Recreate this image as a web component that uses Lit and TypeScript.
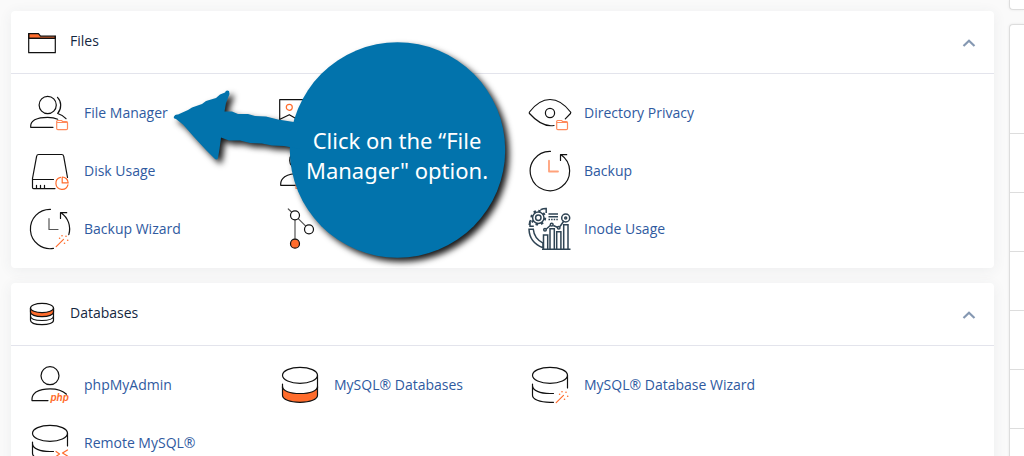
import { LitElement, html, svg, css, nothing } from "lit";
import { customElement, property, state } from "lit/decorators.js";

const folderBadge = svg`<g class="accent"><path class="faint" d="M28.7 30v7.5q0 1.2 1.2 1.2h8.4q1.2 0 1.2-1.2V31.700q0-1-1-1H34.500l-.7-1.200h-4.200q-.9 0-.9.9M29 31.500h9.800"/></g>`;
const wandBadge = svg`<g class="accent"><path d="M28.200 39.600l7.300-7.300"/></g>
  <g class="accent-fill"><circle cx="34" cy="28.700" r=".8"/><circle cx="38" cy="29.200" r=".8"/><circle cx="31.600" cy="31.300" r=".8"/><circle cx="39.700" cy="33.300" r=".8"/><circle cx="36.500" cy="36.300" r=".8"/></g>`;
const drumTop = svg`<ellipse cx="22" cy="12.300" rx="17.500" ry="8"/>`;
const openDrum = svg`${drumTop}<path d="M4.500 21v11.300c0 4 7 7 17.500 7h3.500M4.500 22.500c0 5 7.500 8 17.500 8h3.500M39.500 12.300V25"/>`;
const person = svg`<circle cx="22" cy="12.700" r="9"/><path d="M20 37.600H4V36q0-4 4-7 5.500-3.200 14-3.200 11 0 16.500 5.400"/>`;

const art: Record<string, unknown> = {
  people: svg`<circle cx="19.700" cy="14" r="8.600"/>
    <path d="M29.500 6.300q3.200 3.300 3.200 7.700 0 5-3 8.500 5 1.500 8.300 5.200M25 36.300H2.700V35q0-3.800 4-6.200 5-2.400 13-2.400 6 0 10 1.800"/>${folderBadge}`,
  picture: svg`<path d="M1.700 34V8.700H40V34zM2 28.300l9.300-4.600 7 4 8-6 13.700 8"/><g class="accent"><circle cx="11.300" cy="16.300" r="3"/></g>`,
  eye: svg`<path d="M26 34.500Q14 36.500 1.500 22.500q-.6-.7 0-1.500Q11 8.500 22 8.500T42.500 21q.6.700 0 1.500l-5.200 5.300"/><circle cx="22" cy="22" r="4.600"/>${folderBadge}`,
  disk: svg`<path d="M39.500 28.500L35.700 7.300q-.4-1.800-2-1.800H10.600q-1.600 0-2 1.800L4.500 29.500v9q0 1.100 1.100 1.100H27M4.500 30.500h21M8.500 36.300v3.300M12.500 36.300v3.300M16.500 36.300v3.300"/>
    <g class="accent"><path d="M32.500 28.300a6.100 6.100 0 1 0 7.400 7.500M34.200 28v5.900h6a6 6 0 0 0-6-5.900"/></g>`,
  person: svg`<g transform="translate(-1.300 -1.300)">${person}</g><g class="accent"><path class="faint" d="M18 34.500h8v5h-8z"/></g>`,
  clock: svg`<path d="M22.500 2.300A19.700 19.700 0 1 0 33 5.700M32.500 11.500V5.700h6.200"/><g class="accent"><path class="bold" d="M21 11.700v10.800h9"/></g>`,
  clockWand: svg`<path d="M22.500 2.300A19.700 19.700 0 1 0 25.500 41.400M40.800 27.700A19.700 19.700 0 0 0 33 5.700M32.500 11.500V5.700h6.200"/><path class="gray" d="M21 11.700v10.800h9"/>${wandBadge}`,
  branch: svg`<path class="gray" d="M10.300 2l6.700 6.300v28.400M17 8.300l14 14"/><g class="solid"><circle cx="17" cy="8.300" r="4.500"/><circle cx="31" cy="22.300" r="4.500"/><circle class="hot" cx="17" cy="36.700" r="4.500"/></g>`,
  chart: svg`<g class="slate">
    <path d="M14 42.300h28.500M15.500 42V28h4.200v14M22 42V21.700h4.300V42M28.700 42V24.700h4.200V42M35.700 42V17.700h4.300V42M18.300 22l4-3.500M25.300 18.500l4 1.700M32 19.500l4-5.700"/>
    <circle cx="17" cy="22.800" r="1.300"/><circle cx="23.700" cy="17.700" r="1.400"/><circle cx="30.700" cy="20.700" r="1.300"/><circle cx="37.700" cy="11" r="4"/><circle cx="37.700" cy="11" r="1"/>
    <path d="M20.500 7h9.500M20.500 9.700h9.500"/><path stroke-dasharray="1.500 1.100" d="M20.500 12.400h9.500"/>
    <path d="M1 22.300h4.300q.8 9.200 9.700 13.800v4.700Q1.500 35.700 1 22.300zM1.200 18q.2-2.800 1.300-5M12.500 2.700q3-1.300 5.700-1.200v4.600"/>
    <path d="M2 14v5.300h3.800"/>
    <circle cx="10.300" cy="10.700" r="5.700"/><circle cx="10.300" cy="10.700" r="2.700"/>
    <path stroke-width="2.200" stroke-dasharray="2.400 2.940" d="M10.300 3.900a6.800 6.800 0 1 1-.01 0"/></g>`,
  php: svg`${person}<text x="22.500" y="38">php</text>`,
  drum: svg`<path class="hot" d="M4.500 23.500c0 4.500 7.500 7 17.500 7s17.500-2.500 17.500-7v8.800c0 4-7 7-17.500 7s-17.500-3-17.500-7z"/>${drumTop}<path d="M4.500 21v4M39.500 12.300V25"/>`,
  drumWand: svg`${openDrum}${wandBadge}`,
  drumRemote: svg`${openDrum}<g class="accent"><path d="M28 30.500l3.500 2.500-3.500 2.500M39.500 29l-5 3 5 3"/></g>`,
  folder: svg`<path class="hot" d="M.700 10V5.700h9.800l2 2.500h14.800V10.300H.7z"/><path d="M.700 5.700v19h26.600V8.200M.700 10.300h26.600"/>`,
  stack: svg`<path d="M2.500 8v12.300c0 2.700 5 4.400 11.500 4.400s11.500-1.700 11.500-4.400V8M2.500 16c0 2.800 5 4.500 11.500 4.500s11.500-1.700 11.500-4.500"/>
    <path class="hot" d="M2.500 8v4c0 2.800 5 4.600 11.500 4.600s11.500-1.800 11.500-4.600V8z"/><ellipse class="paper" cx="14" cy="8" rx="11.500" ry="4.600"/>`,
};

@customElement("line-icon")
class LineIcon extends LitElement {
  @property() name = "";
  @property({ type: Number }) size = 44;
  static styles = css`
    :host { display: block; flex: none; }
    svg { display: block; fill: none; stroke: #111; stroke-width: 1.2; stroke-linecap: round; stroke-linejoin: round; }
    .accent { stroke: #ff6c2c; }
    .faint { stroke: #ff8a5c; }
    .bold { stroke: #ffa17a; stroke-width: 1.8; }
    .gray { stroke: #555; }
    .accent-fill { fill: #ff6c2c; stroke: none; }
    .solid { fill: #fff; }
    .paper { fill: #fff; }
    .hot { fill: #ff6c2c; }
    .slate { stroke: #2f4454; stroke-width: 1.5; stroke-linecap: butt; stroke-linejoin: miter; }
    text { font: italic 700 10px "Liberation Sans", sans-serif; fill: #ff6c2c; stroke: none; }
  `;
  render() {
    return html`<svg width=${this.size} height=${this.size} viewBox="0 0 ${this.size} ${this.size}" aria-hidden="true">${art[this.name]}</svg>`;
  }
}

type Tool = { icon: string; label: string; iconOnly?: boolean };

@customElement("tool-panel")
class ToolPanel extends LitElement {
  @property() heading = "";
  @property() icon = "";
  @property({ attribute: false }) tools: Tool[] = [];
  @state() open = true;
  static styles = css`
    :host { display: block; background: #fff; border-radius: 4px; box-shadow: 0 2px 14px rgba(50, 70, 80, 0.07); font: 14px/20px "Open Sans", sans-serif; }
    header { display: flex; align-items: center; gap: 14px; height: 62px; padding: 0 16px 0 17px; border-bottom: 1px solid #e3e4ec; }
    h2 { flex: 1; margin: 0; padding-bottom: 2px; font-size: 14px; font-weight: 400; color: #14273f; }
    button { display: flex; border: 0; padding: 3px 2px 1px; background: none; cursor: pointer; }
    .chevron { fill: none; stroke: #8598b2; stroke-width: 2.2; }
    .grid { display: grid; grid-template-columns: repeat(auto-fill, 250px); margin: 0; padding: 10px 17px; list-style: none; }
    a { display: flex; align-items: center; gap: 12px; height: 58px; color: #2f5a9f; text-decoration: none; }
    a:hover { text-decoration: underline; }
  `;
  render() {
    return html`
      <header>
        <line-icon name=${this.icon} size="28"></line-icon>
        <h2>${this.heading}</h2>
        <button aria-label="Toggle ${this.heading}" aria-expanded=${this.open} @click=${() => (this.open = !this.open)}>
          <svg class="chevron" width="14" height="10" viewBox="0 0 14 10"><path d="M1.500 8L7 2.700 12.500 8" /></svg>
        </button>
      </header>
      ${this.open
        ? html`<ul class="grid">
            ${this.tools.map(
              (t) => html`<li><a href="#" aria-label=${t.label}>
                <line-icon name=${t.icon}></line-icon>${t.iconOnly ? nothing : html`<span>${t.label}</span>`}
              </a></li>`
            )}
          </ul>`
        : nothing}
    `;
  }
}

@customElement("app-root")
class AppRoot extends LitElement {
  files: Tool[] = [
    { icon: "people", label: "File Manager" },
    { icon: "picture", label: "Images", iconOnly: true },
    { icon: "eye", label: "Directory Privacy" },
    { icon: "disk", label: "Disk Usage" },
    { icon: "person", label: "FTP Accounts", iconOnly: true },
    { icon: "clock", label: "Backup" },
    { icon: "clockWand", label: "Backup Wizard" },
    { icon: "branch", label: "Version Control", iconOnly: true },
    { icon: "chart", label: "Inode Usage" },
  ];
  databases: Tool[] = [
    { icon: "php", label: "phpMyAdmin" },
    { icon: "drum", label: "MySQL® Databases" },
    { icon: "drumWand", label: "MySQL® Database Wizard" },
    { icon: "drumRemote", label: "Remote MySQL®" },
  ];
  static styles = css`
    :host { display: block; position: relative; height: 100vh; overflow: hidden; background: #fafafa; }
    .page { display: grid; grid-template-columns: minmax(0, 1fr) 15px; gap: 15px; padding-left: 11px; }
    main { display: grid; gap: 15px; align-content: start; padding-top: 11px; }
    aside { display: grid; gap: 14px; align-content: start; }
    .card { background: #fff; border: 1px solid #ddd; border-right: 0; box-shadow: 0 0 3px rgba(0, 0, 0, 0.08); }
    .stub { height: 9px; border-top: 0; border-radius: 0 0 0 4px; }
    .stats { border-radius: 4px 0 0 0; }
    .row { height: 58px; border-bottom: 1px solid #ddd; }
    .row:first-child { height: 108px; }
    .callout { position: absolute; left: 164px; top: 32px; width: 356px; height: 240px; pointer-events: none; }
    .shape { display: block; fill: #0273ac; filter: drop-shadow(4px 4px 3px rgba(0, 0, 0, 0.9)); }
    .message { position: absolute; left: 133px; top: 93px; width: 200px; margin: 0; color: #fff; font: 22px/30px "Noto Sans", sans-serif; text-align: center; white-space: nowrap; }
  `;
  render() {
    return html`
      <div class="page">
        <main>
          <tool-panel heading="Files" icon="folder" .tools=${this.files}></tool-panel>
          <tool-panel heading="Databases" icon="stack" .tools=${this.databases}></tool-panel>
        </main>
        <aside>
          <div class="card stub"></div>
          <div class="card stats">${[1, 2, 3, 4, 5, 6, 7, 8].map(() => html`<div class="row"></div>`)}</div>
        </aside>
      </div>
      <div class="callout" role="note">
        <svg class="shape" width="356" height="240" viewBox="164 32 356 240" aria-hidden="true">
          <circle cx="397.500" cy="150" r="107.700" />
          <path d="M174 116.500Q175 114 178 114.500L188 110 192 107.500 202 104 206 101 216 98 220 94.500 225 92.500Q226 89.500 229 91L229.500 94 226 103 224.500 111.500 232 111.500 238 114 248 114 255 116 266 116.500 278 119.500 300 123V149L284 146 272 145.500 262 143.500 250 143 240 140.500 229 140.500 221 137.500 219.500 149 218 158Q217 161 214 158L206 150 194 137 183 124.500 176 119Q173 119 174 116.500z" />
        </svg>
        <p class="message">Click on the “File<br />Manager" option.</p>
      </div>
    `;
  }
}
